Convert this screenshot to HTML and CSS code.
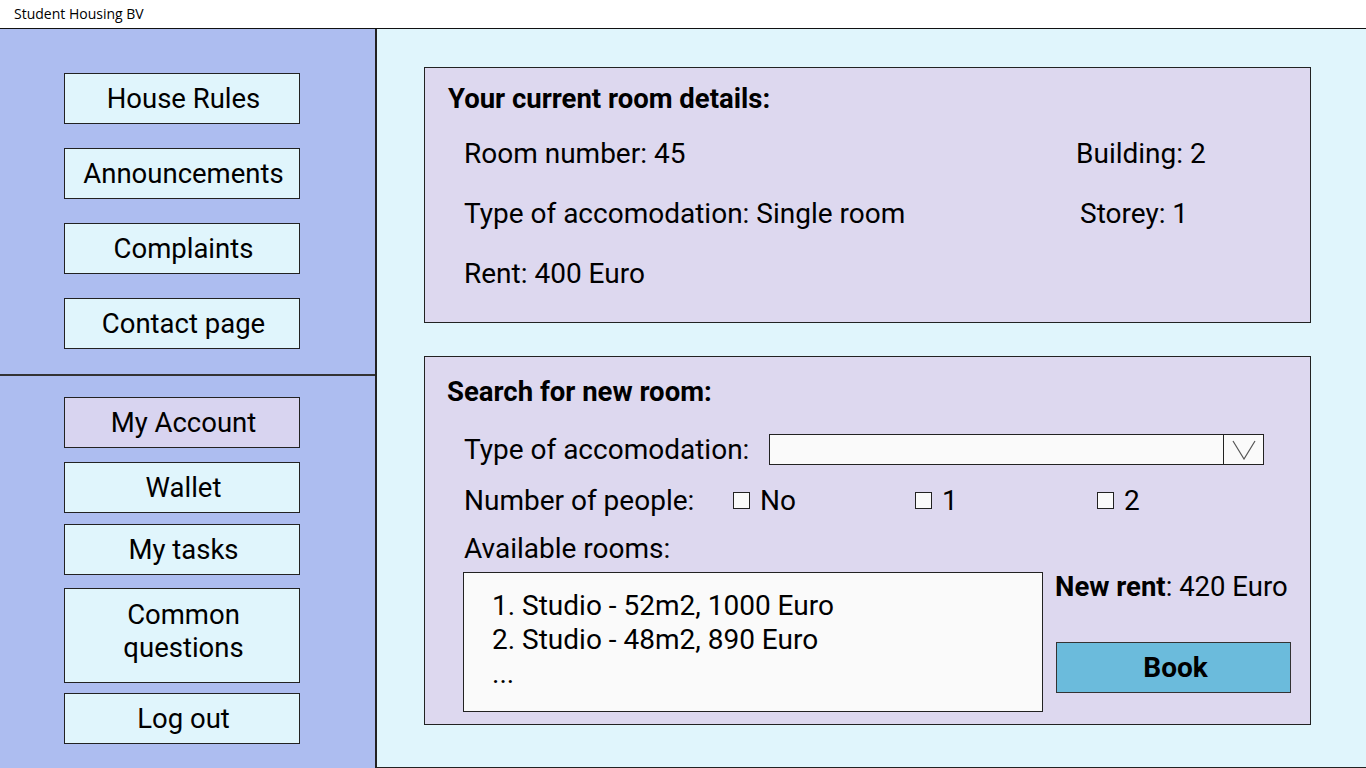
FILE: index.html
```html
<!DOCTYPE html>
<html>
<head>
<meta charset="utf-8">
<link rel="stylesheet" href="styles.css">
</head>
<body>
<div class="titlebar">Student Housing BV</div>
<div class="app">
  <aside class="sidebar">
    <nav class="nav-top">
      <div class="nav-btn">House Rules</div>
      <div class="nav-btn">Announcements</div>
      <div class="nav-btn">Complaints</div>
      <div class="nav-btn">Contact page</div>
    </nav>
    <nav class="nav-bottom">
      <div class="nav-btn active">My Account</div>
      <div class="nav-btn">Wallet</div>
      <div class="nav-btn">My tasks</div>
      <div class="nav-btn tall">Common<br>questions</div>
      <div class="nav-btn">Log out</div>
    </nav>
  </aside>
  <main class="main">
    <section class="panel current">
      <h2 class="panel-title">Your current room details:</h2>
      <div class="details">
        <div class="d-left">Room number: 45</div>
        <div class="d-right">Building: 2</div>
        <div class="d-left">Type of accomodation: Single room</div>
        <div class="d-right shift">Storey: 1</div>
        <div class="d-left">Rent: 400 Euro</div>
        <div class="d-right"></div>
      </div>
    </section>
    <section class="panel search">
      <h2 class="panel-title">Search for new room:</h2>
      <div class="row row-type">
        <span class="label">Type of accomodation:</span>
        <div class="select">
          <div class="select-value"></div>
          <div class="select-arrow">
            <svg width="24" height="20" viewBox="0 0 24 20"><polyline points="1,1 12,19 23,1" fill="none" stroke="#555" stroke-width="1.2"/></svg>
          </div>
        </div>
      </div>
      <div class="row row-people">
        <span class="label">Number of people:</span>
        <span class="opt"><span class="box"></span>No</span>
        <span class="opt"><span class="box"></span>1</span>
        <span class="opt"><span class="box"></span>2</span>
      </div>
      <div class="row row-avail">Available rooms:</div>
      <div class="bottom">
        <div class="list">
          <div>1. Studio - 52m2, 1000 Euro</div>
          <div>2. Studio - 48m2, 890 Euro</div>
          <div>...</div>
        </div>
        <div class="side">
          <div class="rent"><b>New rent</b>: 420 Euro</div>
          <div class="book">Book</div>
        </div>
      </div>
    </section>
  </main>
</div>
</body>
</html>
```
FILE: styles.css
```css
* { box-sizing: border-box; }
html, body { margin: 0; padding: 0; }
body {
  width: 1366px;
  height: 768px;
  overflow: hidden;
  font-family: Roboto, "Liberation Sans", sans-serif;
  color: #000;
  background: #fff;
}
.titlebar {
  height: 29px;
  border-bottom: 1px solid #111;
  font-family: "Open Sans", "Noto Sans", sans-serif;
  font-size: 14px;
  line-height: 27px;
  padding-left: 14px;
  background: #fff;
}
.app {
  display: flex;
  height: 739px;
}
.sidebar {
  width: 377px;
  background: #adbdf0;
  border-right: 2px solid #222;
  display: flex;
  flex-direction: column;
}
.nav-top {
  height: 347px;
  border-bottom: 2px solid #333;
  padding: 44px 0 0 64px;
  display: flex;
  flex-direction: column;
  gap: 24px;
}
.nav-bottom {
  padding: 21px 0 0 64px;
  display: flex;
  flex-direction: column;
  gap: 12px;
}
.nav-bottom .nav-btn:nth-child(2) { margin-top: 2px; }
.nav-bottom .nav-btn:nth-child(3) { margin-top: -1px; }
.nav-bottom .nav-btn:nth-child(4) { margin-top: 1px; }
.nav-bottom .nav-btn:nth-child(5) { margin-top: -2px; }
.nav-btn {
  width: 236px;
  height: 51px;
  background: #e0f5fc;
  border: 1px solid #222;
  font-size: 27.5px;
  display: flex;
  align-items: center;
  justify-content: center;
  text-align: center;
  line-height: 33px;
  padding-left: 3px;
}
.nav-btn.active { background: #d8d4f0; }
.nav-btn.tall { height: 95px; padding-bottom: 10px; }
.main {
  flex: 1;
  background: #e0f5fc;
  border-bottom: 1px solid #222;
  padding: 38px 0 0 47px;
}
.panel {
  width: 887px;
  background: #ddd8ef;
  border: 1px solid #222;
}
.panel-title {
  margin: 0;
  font-size: 27.5px;
  font-weight: 700;
  line-height: 30px;
}
.current {
  height: 256px;
  padding: 16px 0 0 23px;
}
.details {
  display: grid;
  grid-template-columns: 612px 200px;
  grid-auto-rows: 60px;
  padding: 25px 0 0 16px;
  font-size: 28px;
}
.details > div { line-height: 30px; }
.d-right.shift { padding-left: 4px; }
.search {
  margin-top: 33px;
  height: 369px;
  padding: 20px 0 0 22px;
  font-size: 28px;
}
.row {
  display: flex;
  align-items: center;
  padding-left: 17px;
}
.row-type { margin-top: 27px; height: 31px; }
.row-type .label { width: 305px; }
.select {
  width: 495px;
  height: 31px;
  display: flex;
  border: 1px solid #222;
  background: #fafafa;
}
.select-value { flex: 1; }
.select-arrow {
  width: 40px;
  border-left: 1px solid #222;
  display: flex;
  align-items: center;
  justify-content: center;
}
.row-people { margin-top: 20px; height: 30px; }
.row-people .label { width: 269px; }
.opt {
  display: flex;
  align-items: center;
  width: 182px;
}
.box {
  width: 17px;
  height: 17px;
  border: 1px solid #222;
  background: #fafafa;
  margin-right: 10px;
}
.row-avail { margin-top: 18px; height: 30px; }
.bottom {
  display: flex;
  margin-top: 9px;
  padding-left: 16px;
}
.list {
  width: 580px;
  height: 140px;
  border: 1px solid #222;
  background: #fafafa;
  padding: 16px 0 0 28px;
  line-height: 34px;
}
.side {
  margin-left: 12px;
  width: 236px;
}
.rent { line-height: 30px; white-space: nowrap; font-size: 27.5px; }
.rent b { font-weight: 700; }
.book {
  margin-top: 40px;
  margin-left: 1px;
  height: 51px;
  background: #6bbbdc;
  border: 1px solid #333;
  font-weight: 700;
  display: flex;
  align-items: center;
  justify-content: center;
  padding-left: 4px;
}
```
